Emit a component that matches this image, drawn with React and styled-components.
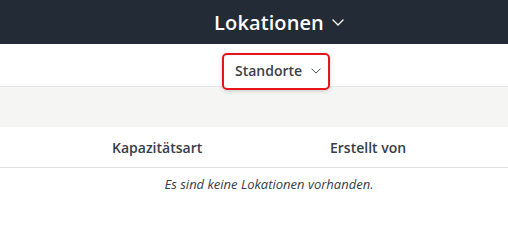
import React from "react";
import styled, { createGlobalStyle } from "styled-components";

const Global = createGlobalStyle`
  html, body {
    margin: 0;
    padding: 0;
    background: #fff;
    font-family: "Open Sans", "Noto Sans", sans-serif;
    color: #363d48;
  }
`;

const TopBar = styled.header`
  height: 44px;
  background: #232b36;
  display: flex;
  align-items: center;
  justify-content: center;
  padding-left: 50px;
  box-sizing: border-box;
`;

const Title = styled.h1`
  margin: 0;
  font-size: 20px;
  font-weight: 600;
  color: #fff;
  display: flex;
  align-items: center;
  gap: 8px;
  letter-spacing: 0.1px;
`;

const SubBar = styled.nav`
  height: 43px;
  background: #fff;
  border-bottom: 1px solid #e6e6e6;
  display: flex;
  align-items: center;
  justify-content: center;
  padding-left: 44px;
  padding-top: 6px;
  box-sizing: border-box;
`;

const TabButton = styled.button`
  height: 37px;
  width: 108px;
  margin-top: 6px;
  border: 2px solid #e8141c;
  border-radius: 5px;
  background: #fff;
  box-shadow: 0 1px 4px rgba(0, 0, 0, 0.18);
  display: flex;
  align-items: center;
  justify-content: flex-start;
  gap: 9px;
  font-family: inherit;
  font-size: 14px;
  font-weight: 600;
  color: #3a414c;
  padding: 0 0 1px 11px;
  position: relative;
  z-index: 1;
`;

const FilterBand = styled.div`
  height: 40px;
  background: #f5f5f3;
`;

const HeadRow = styled.div`
  height: 40px;
  border-bottom: 1px solid #e2e2e2;
  display: grid;
  grid-template-columns: 112px 218px 1fr;
  align-items: center;
  font-size: 14px;
  font-weight: 600;
  color: #363d48;
`;

const Cell = styled.div`
  grid-column: ${(p) => p.col};
  white-space: nowrap;
`;

const EmptyRow = styled.div`
  height: 32px;
  display: flex;
  align-items: center;
  justify-content: center;
  padding-left: 30px;
  font-size: 13px;
  font-style: italic;
  color: #363d48;
`;

const Chevron = ({ size = 12, color = "currentColor", width = 1.4 }) => (
  <svg
    width={size}
    height={size / 2 + 1}
    viewBox="0 0 12 7"
    fill="none"
    stroke={color}
    strokeWidth={width}
    strokeLinecap="round"
    strokeLinejoin="round"
  >
    <path d="M1 1l5 5 5-5" />
  </svg>
);

export default function App() {
  return (
    <>
      <Global />
      <TopBar>
        <Title>
          Lokationen
          <Chevron size={12} color="#fff" />
        </Title>
      </TopBar>
      <SubBar>
        <TabButton>
          Standorte
          <Chevron size={10} color="#4a515c" width={1.2} />
        </TabButton>
      </SubBar>
      <FilterBand />
      <HeadRow>
        <Cell col={2}>Kapazitätsart</Cell>
        <Cell col={3}>Erstellt von</Cell>
      </HeadRow>
      <EmptyRow>Es sind keine Lokationen vorhanden.</EmptyRow>
    </>
  );
}
